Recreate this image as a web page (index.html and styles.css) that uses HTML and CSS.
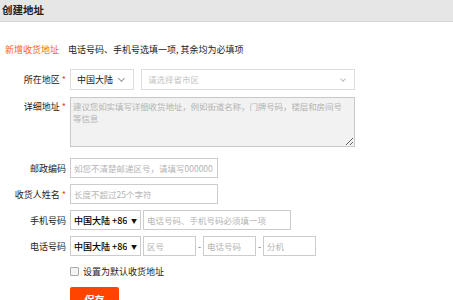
FILE: index.html
```html
<!DOCTYPE html>
<html>
  <head>
    <title>创建地址</title>
    <meta charset="utf-8" />
    <link rel="stylesheet" href="styles.css">
  </head>
  <body>
    <div class="header">创建地址</div>

    <div class="note">
      <span class="note-title">新增收货地址</span>
      <span class="note-text">电话号码、手机号选填一项, 其余均为必填项</span>
    </div>

    <form class="form">
      <div class="row row-region">
        <label class="label">所在地区<i class="star">*</i></label>
        <div class="select select-country">中国大陆<span class="chevron"></span></div>
        <div class="select select-area placeholder">请选择省市区<span class="chevron"></span></div>
      </div>

      <div class="row row-detail">
        <label class="label label-top">详细地址<i class="star">*</i></label>
        <textarea class="textarea" placeholder="建议您如实填写详细收货地址，例如街道名称，门牌号码，楼层和房间号&#10;等信息"></textarea>
      </div>

      <div class="row row-zip">
        <label class="label">邮政编码</label>
        <input type="text" class="input input-mid" placeholder="如您不清楚邮递区号，请填写000000" />
      </div>

      <div class="row row-name">
        <label class="label">收货人姓名<i class="star">*</i></label>
        <input type="text" class="input input-mid" placeholder="长度不超过25个字符" />
      </div>

      <div class="row row-mobile">
        <label class="label">手机号码</label>
        <div class="phone-select"><span class="phone-text">中国大陆 +86</span><span class="caret">▼</span></div>
        <input type="text" class="input input-mobile" placeholder="电话号码、手机号码必须填一项" />
      </div>

      <div class="row row-phone">
        <label class="label">电话号码</label>
        <div class="phone-select"><span class="phone-text">中国大陆 +86</span><span class="caret">▼</span></div>
        <input type="text" class="input input-small" placeholder="区号" />
        <span class="dash">-</span>
        <input type="text" class="input input-small" placeholder="电话号码" />
        <span class="dash">-</span>
        <input type="text" class="input input-small" placeholder="分机" />
      </div>

      <div class="row row-check">
        <label class="check-label"><span class="checkbox"></span>设置为默认收货地址</label>
      </div>

      <div class="row row-save">
        <button type="button" class="save">保存</button>
      </div>
    </form>
  </body>
</html>
```

FILE: styles.css
```css
* {
  box-sizing: border-box;
}

body {
  margin: 0;
  font-family: "Noto Sans CJK SC", "Liberation Sans", sans-serif;
  font-size: 9px;
  color: #333;
  background: #fff;
}

.header {
  height: 22px;
  line-height: 20px;
  padding-left: 2px;
  font-size: 10.5px;
  font-weight: bold;
  color: #222;
  background: #e6e6e6;
  border-bottom: 1px solid #d6d6d6;
}

.note {
  display: flex;
  margin-top: 20px;
  height: 16px;
  line-height: 16px;
}

.note-title {
  width: 68px;
  padding-left: 5px;
  color: #f60;
}

.note-text {
  color: #222;
}

.form {
  margin-top: 11px;
}

.row {
  display: flex;
  align-items: center;
}

.label {
  width: 67px;
  padding-right: 1px;
  text-align: right;
  margin-right: 3px;
  white-space: nowrap;
  color: #222;
}

.label-top {
  align-self: flex-start;
  padding-top: 3px;
}

.star {
  font-style: normal;
  color: #e4393c;
  margin-left: 2px;
}

.row-region {
  height: 21px;
  margin-bottom: 7px;
}

.row-detail {
  margin-bottom: 11px;
}

.row-zip,
.row-name,
.row-mobile,
.row-phone {
  height: 20px;
  margin-bottom: 6px;
}

.select {
  position: relative;
  height: 21px;
  line-height: 19px;
  padding-left: 6px;
  border: 1px solid #ddd;
  color: #222;
}

.select-country {
  width: 64px;
  margin-right: 7px;
}

.select-area {
  width: 214px;
}

.placeholder {
  color: #c4c4c4;
  font-size: 8.5px;
}

.chevron {
  position: absolute;
  right: 9px;
  top: 6px;
  width: 5px;
  height: 5px;
  border-right: 1px solid #999;
  border-bottom: 1px solid #999;
  transform: rotate(45deg);
}

.select-area .chevron {
  border-color: #bbb;
  width: 4px;
  height: 4px;
  top: 7px;
}

.textarea {
  width: 285px;
  height: 50px;
  padding: 2px 2px;
  border: 1px solid #c8c8c8;
  background: #f2f2f2;
  font-family: inherit;
  font-size: 8.5px;
  line-height: 12px;
  letter-spacing: -0.1px;
  color: #333;
  resize: vertical;
}

.input {
  height: 20px;
  padding: 0 3px;
  border: 1px solid #ccc;
  font-family: inherit;
  font-size: 8.5px;
  color: #333;
  outline: none;
}

.input::placeholder,
.textarea::placeholder {
  color: #b4b4b4;
}

.input-mid {
  width: 148px;
}

.input-mobile {
  width: 148px;
}

.input-small {
  width: 53px;
}

.phone-select {
  display: flex;
  align-items: center;
  width: 71px;
  height: 20px;
  margin-right: 2px;
  padding-left: 3px;
  border: 1px solid #ccc;
  color: #000;
}

.phone-text {
  width: 53px;
  margin-right: 4px;
  overflow: hidden;
  white-space: nowrap;
  font-weight: 500;
}

.caret {
  font-size: 6px;
  color: #111;
}

.dash {
  width: 7px;
  text-align: center;
  color: #666;
}

.row-check {
  height: 18px;
  margin-top: 6px;
  padding-left: 70px;
}

.check-label {
  display: flex;
  align-items: center;
  color: #222;
}

.checkbox {
  width: 9px;
  height: 9px;
  margin-right: 4px;
  border: 1px solid #aaa;
  border-radius: 1px;
  background: #f4f4f4;
}

.row-save {
  margin-top: 7px;
  padding-left: 70px;
}

.save {
  width: 49px;
  height: 24px;
  border: none;
  border-radius: 2px;
  background: #ff4400;
  color: #fff;
  font-family: inherit;
  font-size: 10px;
  font-weight: bold;
  padding: 0;
}
```
